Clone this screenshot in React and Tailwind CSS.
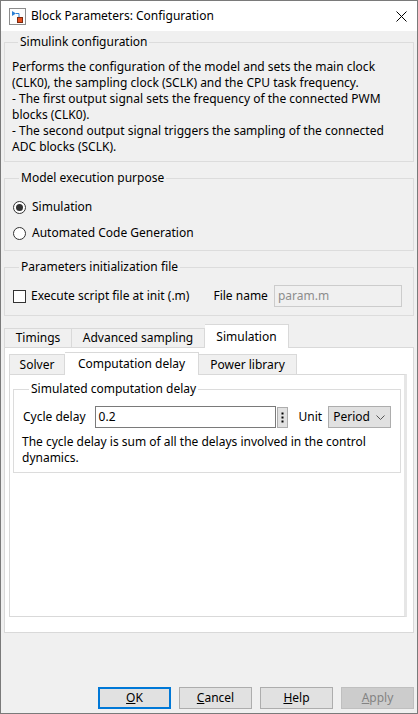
import React from "react";

function BlockIcon() {
  return (
    <svg width="17" height="17" viewBox="0 0 17 17" className="ml-[8px] shrink-0">
      <rect x="0.5" y="0.5" width="16" height="16" fill="#fdfdfd" stroke="#8c8c8c" />
      <path d="M3 3 L3 8 L7 5.5 Z" fill="#2a7fd4" />
      <path d="M7 5.5 H10 V9" stroke="#2a7fd4" strokeWidth="1" fill="none" />
      <rect x="8.5" y="9.5" width="5" height="5" fill="#e8501e" stroke="#7a2a10" />
    </svg>
  );
}

function Radio({ checked, label }) {
  return (
    <div className="h-[26px] flex items-center">
      <span className="w-[13px] h-[13px] rounded-full border border-[#333333] bg-white flex items-center justify-center shrink-0">
        {checked && <span className="w-[7px] h-[7px] rounded-full bg-[#333333]" />}
      </span>
      <span className="ml-[6px]">{label}</span>
    </div>
  );
}

function Btn({ children, primary, disabled }) {
  return (
    <button
      className={
        "w-[73px] h-[22px] flex items-center justify-center " +
        (primary
          ? "border-2 border-[#0078d7] bg-[#e1e1e1]"
          : disabled
          ? "border border-[#bfbfbf] bg-[#cccccc] text-[#838383]"
          : "border border-[#adadad] bg-[#e1e1e1]")
      }
    >
      {children}
    </button>
  );
}

export default function App() {
  return (
    <div className="w-[418px] h-[714px] flex flex-col border border-[#7a7a7a] bg-[#f0f0f0] text-[12px] leading-[16px] text-black font-['Noto_Sans',sans-serif]">
      {/* title bar */}
      <div className="h-[30px] shrink-0 bg-white flex items-center">
        <BlockIcon />
        <span className="ml-[5px]">Block Parameters: Configuration</span>
        <svg width="11" height="11" viewBox="0 0 11 11" className="ml-auto mr-[10px]">
          <path d="M0.5 0.5 L10.5 10.5 M10.5 0.5 L0.5 10.5" stroke="#000" strokeWidth="1" />
        </svg>
      </div>

      <div className="flex-1 flex flex-col px-[3px]">
        <fieldset className="mt-[3px] border border-[#dcdcdc] px-[7px] pt-[9px] pb-[6px]">
          <legend className="ml-[6px] px-[2px]">Simulink configuration</legend>
          <p>
            Performs the configuration of the model and sets the main clock (CLK0), the sampling clock (SCLK) and the CPU task frequency.
            <br />- The first output signal sets the frequency of the connected PWM blocks (CLK0).
            <br />- The second output signal triggers the sampling of the connected ADC blocks (SCLK).
          </p>
        </fieldset>

        <fieldset className="mt-[8px] border border-[#dcdcdc] px-[8px] pt-[8px] pb-[4px]">
          <legend className="ml-[6px] px-[2px]">Model execution purpose</legend>
          <Radio checked label="Simulation" />
          <Radio label="Automated Code Generation" />
        </fieldset>

        <fieldset className="mt-[8px] border border-[#dcdcdc] px-[8px] pt-[8px] pb-[6px]">
          <legend className="ml-[6px] px-[2px]">Parameters initialization file</legend>
          <div className="h-[26px] flex items-center">
            <span className="w-[13px] h-[13px] border border-[#333333] bg-white shrink-0" />
            <span className="ml-[5px]">Execute script file at init (.m)</span>
            <span className="ml-[24px]">File name</span>
            <div className="ml-[6px] w-[128px] h-[22px] border border-[#cccccc] bg-[#f0f0f0] text-[#8d8d8d] flex items-center px-[3px]">
              param.m
            </div>
          </div>
        </fieldset>

        {/* outer tab widget */}
        <div className="mt-[8px] flex flex-col">
          <div className="flex items-end h-[23px]">
            <div className="w-[68px] h-[19px] border border-b-0 border-[#d9d9d9] bg-[#f0f0f0] flex items-center justify-center">
              Timings
            </div>
            <div className="w-[133px] h-[19px] border border-b-0 border-l-0 border-[#d9d9d9] bg-[#f0f0f0] flex items-center justify-center">
              Advanced sampling
            </div>
            <div className="relative z-10 -mb-px w-[84px] h-[24px] border border-b-0 border-l-0 border-[#d9d9d9] bg-white flex items-center justify-center">
              Simulation
            </div>
          </div>
          <div className="h-[286px] border border-[#d9d9d9] bg-white px-[4px] pt-[4px] flex flex-col">
            {/* inner tab widget */}
            <div className="flex items-end h-[22px]">
              <div className="w-[56px] h-[20px] border border-b-0 border-[#d9d9d9] bg-[#f0f0f0] flex items-center justify-center">
                Solver
              </div>
              <div className="relative z-10 -mb-px w-[134px] h-[23px] border border-b-0 border-l-0 border-[#d9d9d9] bg-white flex items-center justify-center">
                Computation delay
              </div>
              <div className="w-[98px] h-[20px] border border-b-0 border-l-0 border-[#d9d9d9] bg-[#f0f0f0] flex items-center justify-center">
                Power library
              </div>
            </div>
            <div className="h-[243px] mr-[2px] border border-[#d9d9d9] border-r-[3px] border-r-[#e6e6e6] bg-white px-[3px] pt-[6px]">
              <fieldset className="mr-[1px] border border-[#dcdcdc] px-[9px] pt-[9px] pb-[6px]">
                <legend className="ml-[6px] px-[2px]">Simulated computation delay</legend>
                <div className="h-[22px] flex items-center whitespace-nowrap">
                  <span className="shrink-0">Cycle delay</span>
                  <div className="ml-[9px] w-[181px] h-[22px] shrink-0 border border-[#7a7a7a] bg-white flex items-center px-[3px]">
                    0.2
                  </div>
                  <div className="ml-[1px] w-[11px] h-[21px] shrink-0 border border-[#adadad] bg-[#e1e1e1] flex items-center justify-center">
                    <svg width="3" height="11" viewBox="0 0 3 11">
                      <rect x="0.5" y="0.5" width="2" height="2" fill="#000" />
                      <rect x="0.5" y="4.5" width="2" height="2" fill="#000" />
                      <rect x="0.5" y="8.5" width="2" height="2" fill="#000" />
                    </svg>
                  </div>
                  <span className="ml-[11px] shrink-0">Unit</span>
                  <div className="ml-[6px] w-[63px] h-[22px] shrink-0 border border-[#adadad] bg-[#e1e1e1] flex items-center pl-[4px]">
                    <span>Period</span>
                    <svg width="9" height="5" viewBox="0 0 9 5" className="ml-auto mr-[5px]">
                      <path d="M0.5 0.5 L4.5 4.5 L8.5 0.5" stroke="#555" strokeWidth="1" fill="none" />
                    </svg>
                  </div>
                </div>
                <p className="mt-[6px] -ml-px">
                  The cycle delay is sum of all the delays involved in the control dynamics.
                </p>
              </fieldset>
            </div>
          </div>
        </div>

        <div className="mt-auto mb-[4px] flex justify-end gap-[8px]">
          <Btn primary>
            <span><u>O</u>K</span>
          </Btn>
          <Btn>
            <span><u>C</u>ancel</span>
          </Btn>
          <Btn>
            <span><u>H</u>elp</span>
          </Btn>
          <Btn disabled>
            <span><u>A</u>pply</span>
          </Btn>
        </div>
      </div>
    </div>
  );
}
